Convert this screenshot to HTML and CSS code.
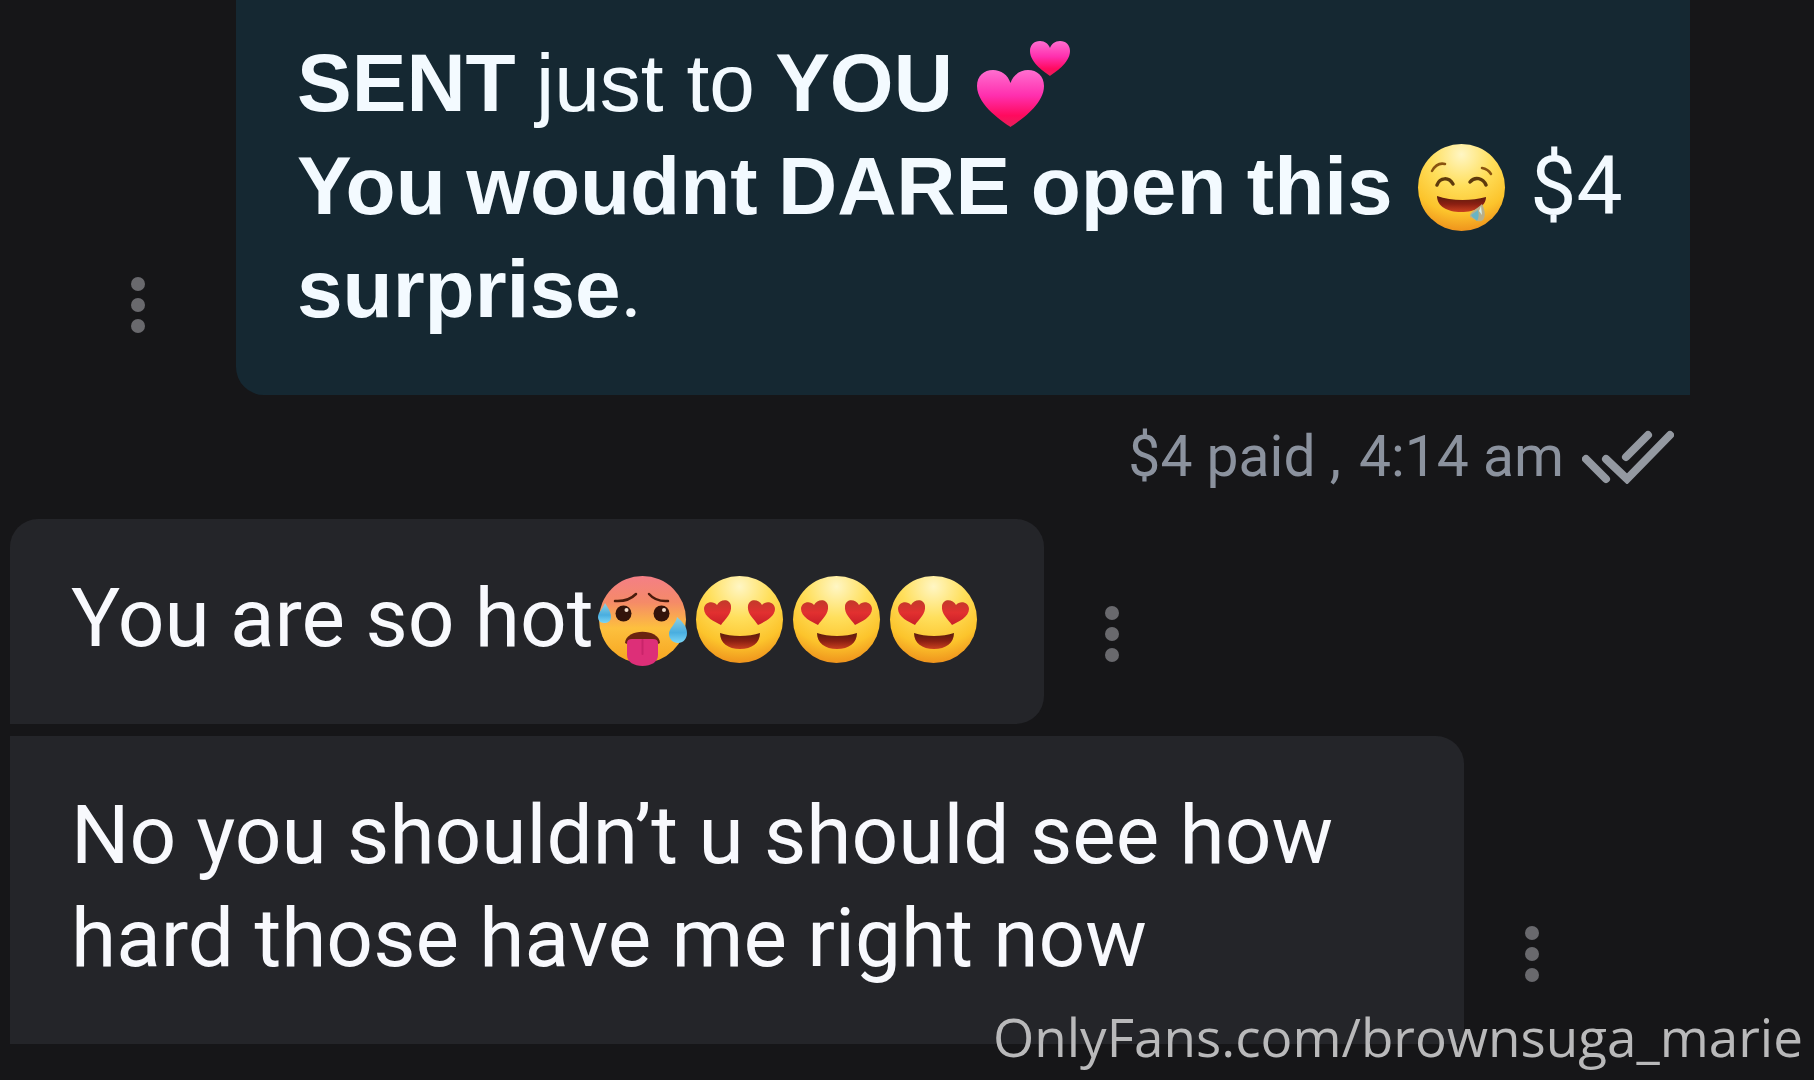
FILE: index.html
```html
<!DOCTYPE html>
<html lang="en">
<head>
    <meta charset="UTF-8">
    <meta name="viewport" content="width=device-width, initial-scale=1.0">
    <title>Messages</title>
    <link rel="stylesheet" href="styles.css">
</head>
<body>
    <!-- Emoji shapes shared by the messages -->
    <svg class="sprite" aria-hidden="true">
        <defs>
            <radialGradient id="face" cx="0.5" cy="0.12" r="0.9">
                <stop offset="0" stop-color="#fff6c4"/>
                <stop offset="0.4" stop-color="#ffdf5c"/>
                <stop offset="0.75" stop-color="#fcc42c"/>
                <stop offset="1" stop-color="#ee8f1b"/>
            </radialGradient>
            <linearGradient id="hot-face" x1="0" y1="0" x2="0" y2="1">
                <stop offset="0" stop-color="#f47f86"/>
                <stop offset="0.3" stop-color="#f58a68"/>
                <stop offset="0.6" stop-color="#fdc03e"/>
                <stop offset="1" stop-color="#f6a51f"/>
            </linearGradient>
            <linearGradient id="pink" x1="0" y1="0" x2="0" y2="1">
                <stop offset="0" stop-color="#ff6fd0"/>
                <stop offset="0.45" stop-color="#ff2fae"/>
                <stop offset="0.8" stop-color="#ff0a5e"/>
                <stop offset="1" stop-color="#e8205a"/>
            </linearGradient>
            <linearGradient id="red" x1="0" y1="0" x2="0" y2="1">
                <stop offset="0" stop-color="#c23a2a"/>
                <stop offset="0.5" stop-color="#e23030"/>
                <stop offset="1" stop-color="#c91f28"/>
            </linearGradient>
            <linearGradient id="mouth" x1="0" y1="0" x2="0" y2="1">
                <stop offset="0" stop-color="#5a1d0c"/>
                <stop offset="0.5" stop-color="#8a1f12"/>
                <stop offset="1" stop-color="#c9401f"/>
            </linearGradient>
            <linearGradient id="drop" x1="0" y1="0" x2="0" y2="1">
                <stop offset="0" stop-color="#8fd0e0"/>
                <stop offset="0.6" stop-color="#49aee0"/>
                <stop offset="1" stop-color="#7cd6f5"/>
            </linearGradient>
        </defs>
        <symbol id="hearts" viewBox="0 0 97 97">
            <path fill="url(#pink)" d="M37.500 91C32 87 4 70 4 50C4 40 11 34 20 34C28 34 35 39 37.500 47C40 39 47 34 55 34C64 34 71 40 71 50C71 70 43 87 37.500 91Z"/>
            <path fill="url(#pink)" d="M77 40C73 37 57 27 57 15C57 9 61 5 67 5C72 5 75.500 8 77 12C78.500 8 82 5 87 5C93 5 97 9 97 15C97 27 81 37 77 40Z"/>
        </symbol>
        <symbol id="drool" viewBox="0 0 97 97">
            <circle cx="48.500" cy="48.500" r="43.500" fill="url(#face)"/>
            <g fill="none" stroke="#8a5310" stroke-width="2.500" stroke-linecap="round">
                <path d="M19 32Q24 23 32 25"/>
                <path d="M69 29Q75 30 78 35"/>
            </g>
            <g fill="none" stroke="#5e3a0c" stroke-width="3.500" stroke-linecap="round">
                <path d="M24 46C27 38 36 38 40 45"/>
                <path d="M57 43C62 37 70 39 73 46"/>
            </g>
            <path fill="url(#mouth)" d="M24 57C38 62 58 62 73 58C73 67 63 73 48 73C34 73 24 67 24 57Z"/>
            <path fill="#b9b08a" d="M69 65C72 71 73 77 70 81C66 85 60 79 57 78C56 73 64 70 69 65Z"/>
            <path fill="#69b4c4" d="M65 71C66 75 66 79 64 82C61 79 59 78 58 76Z"/>
            <path fill="#d6f0ee" d="M68 67L69 76L66 72Z"/>
        </symbol>
        <symbol id="hot" viewBox="0 0 97 97">
            <circle cx="48.500" cy="48.500" r="43.500" fill="url(#hot-face)"/>
            <g fill="none" stroke="#4a1c0c" stroke-width="2.500" stroke-linecap="round">
                <path d="M21 30Q34 31 42 23"/>
                <path d="M55 23Q62 31 74 30"/>
            </g>
            <g fill="#33130a">
                <circle cx="29.500" cy="42.500" r="8"/>
                <circle cx="67.500" cy="42.500" r="8"/>
            </g>
            <g fill="#f2dccb">
                <circle cx="32.500" cy="39" r="2"/>
                <circle cx="70" cy="39" r="2"/>
            </g>
            <path fill="#6b2410" d="M31 72C32 57 65 57 66 72L62 74H35Z"/>
            <path fill="#dd2f78" d="M33 72Q33 68 38 68H59Q64 68 64 72V84C64 91 57 95 48.500 95C40 95 33 91 33 84Z"/>
            <path fill="none" stroke="#c9246a" stroke-width="2" stroke-linecap="round" d="M48.500 69V83"/>
            <path fill="url(#drop)" d="M11 32C15 38 17 42 17 46C17 50 14 52 10 52C6 52 4 49 4 46C4 41 9 38 11 32Z"/>
            <path fill="url(#drop)" d="M83 46C89 51 93 56 93 62C93 68 89 72 84 72C79 72 75 68 75 63C75 57 82 53 83 46Z"/>
        </symbol>
        <symbol id="love" viewBox="0 0 97 97">
            <circle cx="48.500" cy="48.500" r="43.500" fill="url(#face)"/>
            <path fill="url(#red)" d="M30 54C24 51 13 46 13 38C13 31 22 29 26 34C29 28 39 27 40 35C41 43 34 48 30 54Z"/>
            <path fill="url(#red)" d="M67 54C63 48 56 43 57 35C58 27 68 28 71 34C75 29 84 31 84 38C84 46 73 51 67 54Z"/>
            <path fill="url(#mouth)" d="M29 62C40 66 58 66 69 62C69 72 61 78 49 78C37 78 29 72 29 62Z"/>
        </symbol>
    </svg>

    <main class="chat">
        <div class="row sent">
            <button class="more" type="button" aria-label="Message options">
                <i></i><i></i><i></i>
            </button>
            <div class="bubble">
                <b>SENT</b> <span class="plain">just to</span> <b>YOU</b> <svg class="emoji" role="img" aria-label="Two hearts"><use href="#hearts"/></svg><br>
                <b>You</b> <b>woudnt</b> <b>DARE</b> <b>open</b> <b>this</b> <svg class="emoji" role="img" aria-label="Drooling face"><use href="#drool"/></svg> $4 <b>surprise</b>.
            </div>
        </div>

        <div class="meta">
            <span>$4 paid ,</span>
            <time>4:14 am</time>
            <svg class="checks" viewBox="0 0 92 54" role="img" aria-label="Read">
                <path d="M4 29L24 49M24 29L45 49L88 5M44 27L66 5"/>
            </svg>
        </div>

        <div class="row received">
            <div class="bubble first">You are so hot<svg class="emoji" role="img" aria-label="Hot face"><use href="#hot"/></svg><svg class="emoji" role="img" aria-label="Heart eyes"><use href="#love"/></svg><svg class="emoji" role="img" aria-label="Heart eyes"><use href="#love"/></svg><svg class="emoji" role="img" aria-label="Heart eyes"><use href="#love"/></svg></div>
            <button class="more" type="button" aria-label="Message options">
                <i></i><i></i><i></i>
            </button>
        </div>

        <div class="row received">
            <div class="bubble">No you shouldn’t u should see how hard those have me right now</div>
            <button class="more" type="button" aria-label="Message options">
                <i></i><i></i><i></i>
            </button>
        </div>
    </main>

    <div class="watermark">OnlyFans.com/brownsuga_marie</div>
</body>
</html>
```
FILE: styles.css
```css
* {
    box-sizing: border-box;
}

body {
    margin: 0;
    background-color: #161618;
    color: #f8f9fd;
    font-family: Roboto, sans-serif;
    font-size: 82px;
    line-height: 103px;
    overflow: hidden;
}

.sprite {
    position: absolute;
    width: 0;
    height: 0;
}

.chat {
    padding: 0 10px;
}

.row {
    display: flex;
    align-items: flex-end;
}

.sent {
    justify-content: flex-end;
    gap: 88px;
    padding-right: 114px;
}

.received {
    gap: 58px;
    margin-bottom: 12px;
}

.bubble {
    max-width: calc(100vw - 360px);
    padding: 48px 62px 54px 61px;
    background-color: #242529;
    border-radius: 0 28px 0 0;
}

.bubble.first {
    border-radius: 28px 28px 28px 0;
}

.sent .bubble {
    padding-top: 32px;
    background-color: #152832;
    color: #f3faff;
    border-radius: 0 0 0 28px;
}

.bubble b,
.plain {
    font-family: "Liberation Sans", Arial, sans-serif;
    line-height: 1;
}

.emoji {
    width: 97px;
    height: 97px;
    vertical-align: -22px;
    overflow: visible;
}

.more {
    display: flex;
    flex-direction: column;
    flex-shrink: 0;
    align-items: center;
    justify-content: space-between;
    width: 20px;
    height: 56px;
    margin: 0 0 62px;
    padding: 0;
    background: none;
    border: none;
    cursor: pointer;
}

.more i {
    width: 14px;
    height: 14px;
    background-color: #69696d;
    border-radius: 50%;
}

.meta {
    display: flex;
    align-items: center;
    justify-content: flex-end;
    gap: 18px;
    padding-right: 130px;
    color: #8b929e;
    font-size: 57px;
    line-height: 124px;
}

.checks {
    width: 92px;
    height: 54px;
    fill: none;
    stroke: #9499a1;
    stroke-width: 8;
    stroke-linecap: round;
}

/* Sits over the last message */
.watermark {
    position: fixed;
    right: 11px;
    bottom: 0;
    color: #b9b9ba;
    font-family: "Open Sans", "Noto Sans", sans-serif;
    font-size: 53px;
    line-height: 86px;
}
```
